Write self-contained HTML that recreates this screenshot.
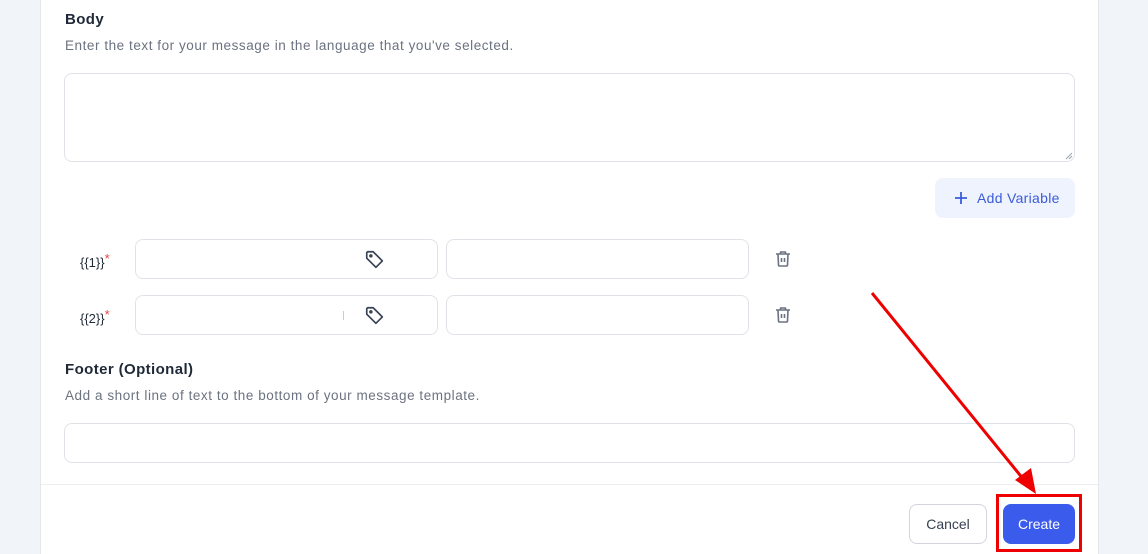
<!DOCTYPE html>
<html><head><style>
*{box-sizing:border-box;margin:0;padding:0}
body{width:1148px;height:554px;background:#f1f5f9;position:relative;overflow:hidden;font-family:"Liberation Sans",sans-serif}
.card{position:absolute;left:40px;top:0;width:1059px;height:554px;background:#fff;border-left:1px solid #e5e7eb;border-right:1px solid #e5e7eb}
.a{position:absolute}
.h{font-size:15px;font-weight:bold;color:#1f2937;letter-spacing:.4px}
.s{font-size:13.5px;color:#6b7280;letter-spacing:.55px}
.in{position:absolute;border:1px solid #dfe3e8;border-radius:8px;background:#fff}
.lbl{position:absolute;font-size:13px;color:#1f2937}
.lbl b{color:#ef4444;font-weight:normal;font-size:13px;vertical-align:4px}
</style></head><body>
<div class="card"></div>
<div class="a h" style="left:65px;top:11px">Body</div>
<div class="a s" style="left:65px;top:38px">Enter the text for your message in the language that you've selected.</div>
<div class="in" style="left:64px;top:73px;width:1011px;height:89px"></div>
<svg class="a" style="left:1065px;top:152px" width="8" height="8"><path d="M1 7L7 1M4 7L7 4" stroke="#9ca3af"/></svg>
<div class="a" style="left:935px;top:178px;width:140px;height:40px;background:#eef3fd;border-radius:8px"></div>
<svg class="a" style="left:953px;top:190px" width="16" height="16"><path d="M8 2V14M2 8H14" stroke="#3b5bdb" stroke-width="1.8"/></svg>
<div class="a" style="left:977px;top:190px;font-size:14px;color:#3b5bdb;letter-spacing:.3px">Add Variable</div>

<div class="lbl" style="left:80px;top:251px">{{1}}<b>*</b></div>
<div class="in" style="left:135px;top:239px;width:303px;height:40px"></div>
<div class="in" style="left:446px;top:239px;width:303px;height:40px"></div>
<div class="lbl" style="left:80px;top:307px">{{2}}<b>*</b></div>
<div class="in" style="left:135px;top:295px;width:303px;height:40px"></div>
<div class="in" style="left:446px;top:295px;width:303px;height:40px"></div>
<div class="a" style="left:343px;top:311px;width:1px;height:9px;background:#ccc"></div>
<svg class="a" style="left:364px;top:249px" width="22" height="22" viewBox="0 0 24 24" fill="none" stroke="#374151" stroke-width="1.8" stroke-linejoin="round"><path d="M3 4V10L13 20L20 13L10 3H4Z"/><circle cx="7.5" cy="7.5" r="1" fill="#374151"/></svg>
<svg class="a" style="left:364px;top:305px" width="22" height="22" viewBox="0 0 24 24" fill="none" stroke="#374151" stroke-width="1.8" stroke-linejoin="round"><path d="M3 4V10L13 20L20 13L10 3H4Z"/><circle cx="7.5" cy="7.5" r="1" fill="#374151"/></svg>
<svg class="a" style="left:773px;top:249px" width="20" height="20" viewBox="0 0 20 20" fill="none" stroke="#6b7280" stroke-width="1.6" stroke-linejoin="round"><path d="M3 5H17M7.5 5V3H12.5V5M5 5L5.5 16Q5.5 17 6.5 17H13.5Q14.5 17 14.5 16L15 5M8.5 9V13M11.5 9V13"/></svg>
<svg class="a" style="left:773px;top:305px" width="20" height="20" viewBox="0 0 20 20" fill="none" stroke="#6b7280" stroke-width="1.6" stroke-linejoin="round"><path d="M3 5H17M7.5 5V3H12.5V5M5 5L5.5 16Q5.5 17 6.5 17H13.5Q14.5 17 14.5 16L15 5M8.5 9V13M11.5 9V13"/></svg>

<div class="a h" style="left:65px;top:361px">Footer (Optional)</div>
<div class="a s" style="left:65px;top:388px">Add a short line of text to the bottom of your message template.</div>
<div class="in" style="left:64px;top:423px;width:1011px;height:40px"></div>
<div class="a" style="left:41px;top:484px;width:1057px;height:1px;background:#eceef1"></div>
<div class="a" style="left:909px;top:504px;width:78px;height:40px;border:1px solid #d1d5db;border-radius:8px;font-size:14px;color:#374151;text-align:center;line-height:38px">Cancel</div>
<div class="a" style="left:1003px;top:504px;width:72px;height:40px;background:#3b5bed;border-radius:8px;font-size:14px;color:#fff;text-align:center;line-height:40px">Create</div>
<div class="a" style="left:996px;top:494px;width:86px;height:58px;border:3px solid #e00"></div>
<svg class="a" style="left:0;top:0" width="1148" height="554"><line x1="872" y1="293" x2="1024" y2="480" stroke="#e00" stroke-width="3"/><path d="M1036 494L1015 480L1031 468Z" fill="#e00"/></svg>
</body></html>
